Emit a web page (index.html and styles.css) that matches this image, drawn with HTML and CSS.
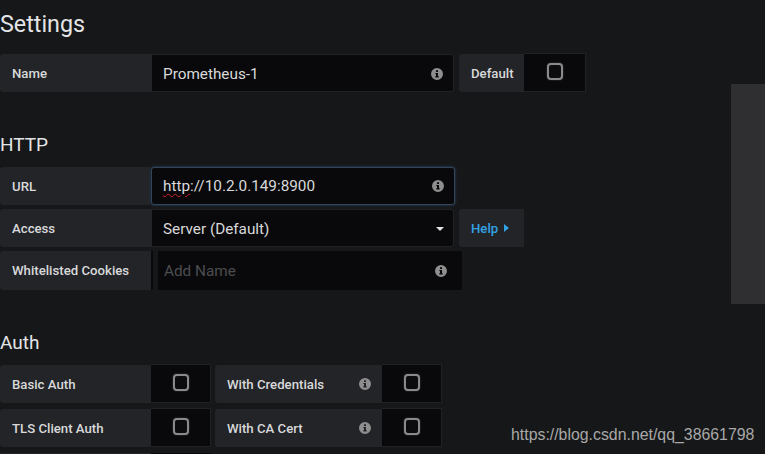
FILE: index.html
```html
<!DOCTYPE html>
<html lang="en">
<head>
    <meta charset="UTF-8">
    <title>Settings</title>
    <link rel="stylesheet" href="styles.css">
</head>
<body>
<svg class="defs" width="0" height="0">
    <symbol id="info" viewBox="0 0 12 12">
        <path fill-rule="evenodd" d="M6 0a6 6 0 1 1 0 12A6 6 0 0 1 6 0zM5 2.200v1.900h2V2.200zM4.300 5v1.100H5v2.200h-.7v1.200h3.400V8.300H7V5z"/>
    </symbol>
</svg>

<div class="page">
    <h3 class="title">Settings</h3>
    <div class="row row-name">
        <div class="label w-name">Name</div>
        <div class="input w-input"><span>Prometheus-1</span><svg class="info"><use href="#info"/></svg></div>
        <div class="label w-default">Default</div>
        <div class="check-cell w-default-check"><span class="check"></span></div>
    </div>

    <h3 class="heading heading-http">HTTP</h3>
    <div class="row">
        <div class="label w-url">URL</div>
        <div class="input input-focus"><span><span class="squiggle">http</span>://10.2.0.149:8900</span><svg class="info"><use href="#info"/></svg></div>
    </div>
    <div class="row">
        <div class="label w-name">Access</div>
        <div class="input w-input"><span>Server (Default)</span><i class="caret"></i></div>
        <div class="label w-default help">Help<i class="caret-right"></i></div>
    </div>
    <div class="row row-cookies">
        <div class="label w-cookies">Whitelisted Cookies</div>
        <div class="cookie-gap"></div>
        <div class="input input-flat"><span class="placeholder">Add Name</span><svg class="info"><use href="#info"/></svg></div>
    </div>

    <h3 class="heading heading-auth">Auth</h3>
    <div class="row row-auth">
        <div class="label w-cookies">Basic Auth</div>
        <div class="check-cell w-check"><span class="check"></span></div>
        <div class="label w-with">With Credentials<svg class="info"><use href="#info"/></svg></div>
        <div class="check-cell w-check"><span class="check"></span></div>
    </div>
    <div class="row row-auth">
        <div class="label w-cookies">TLS Client Auth</div>
        <div class="check-cell w-check"><span class="check"></span></div>
        <div class="label w-with">With CA Cert<svg class="info"><use href="#info"/></svg></div>
        <div class="check-cell w-check"><span class="check"></span></div>
    </div>
    <div class="row row-cut">
        <div class="label w-cookies"></div>
        <div class="check-cell-cut w-check"></div>
    </div>
</div>

<div class="scroll-thumb"></div>
<div class="watermark">https://blog.csdn.net/qq_38661798</div>
</body>
</html>
```

FILE: styles.css
```css
html, body { margin: 0; height: 454px; overflow: hidden; }
body { background-color: #161719; color: #d8d9da; font-family: Roboto, 'Liberation Sans', sans-serif; position: relative; }
.defs { position: absolute; }
.page { padding-top: 11px; }

.title { margin: 0 0 16px; font-size: 23.3px; line-height: 27px; font-weight: 400; color: #e3e4e5; }
.heading { margin: 0; font-size: 19px; line-height: 22px; font-weight: 400; color: #e3e4e5; }
.heading-http { margin-top: 42px; margin-bottom: 11px; }
.heading-auth { margin-top: 42px; margin-bottom: 11px; }

.row { display: flex; height: 38px; margin-bottom: 4px; }
.row-name { margin-bottom: 0; }
.row-auth { margin-bottom: 6px; }
.row-cookies { height: 39px; }
.row-cut { height: 3px; margin-bottom: 0; }

.label { display: flex; align-items: center; box-sizing: border-box; padding-left: 12px; background-color: #232428; border-radius: 3px 0 0 3px; font-size: 13.2px; font-weight: 500; color: #d8d9da; flex: none; }
.w-name { width: 152px; }
.w-url { width: 150px; }
.w-cookies { width: 151px; }
.w-default { width: 65px; margin-left: 5px; border-radius: 3px 0 0 3px; }
.w-with { width: 167px; margin-left: 4px; justify-content: space-between; padding-right: 11px; }
.w-default-check { width: 62px; }
.w-check { width: 60px; }

.input { display: flex; align-items: center; justify-content: space-between; box-sizing: border-box; background-color: #09090b; border: 1px solid #202226; border-radius: 0 3px 3px 0; padding: 0 10px 0 10px; font-size: 15.3px; color: #d8d9da; flex: none; }
.w-input { width: 302px; border-left: 0; padding-left: 11px; padding-top: 1px; }
.input-focus { width: 304px; border-color: #31465a; border-radius: 3px; box-shadow: 0 0 3px #2f4a66; padding-left: 11px; margin-left: 1px; }
.input-flat { width: 304px; border: 0; border-radius: 0; padding: 0 15px 0 6px; margin-left: 5px; }
.cookie-gap { width: 2px; background-color: #09090b; }
.placeholder { color: #4c4d50; }
.squiggle { text-decoration: underline wavy #d0212b; text-decoration-thickness: 1px; text-underline-offset: 2px; }

.info { width: 12px; height: 12px; fill: #8e8e8e; flex: none; }
.caret { width: 0; height: 0; margin-right: -1px; border-left: 4px solid transparent; border-right: 4px solid transparent; border-top: 4px solid #e3e4e5; }
.help { color: #33a2e5; }
.caret-right { width: 0; height: 0; margin-left: 6px; border-top: 4px solid transparent; border-bottom: 4px solid transparent; border-left: 5px solid #33a2e5; }

.check-cell { display: flex; align-items: center; justify-content: center; box-sizing: border-box; background-color: #09090b; border: 1px solid #202226; border-left: 0; margin-top: -1px; height: 39px; flex: none; }
.check-cell-cut { background-color: #09090b; height: 3px; flex: none; }
.check { display: block; box-sizing: border-box; width: 16px; height: 17px; margin-top: -2px; background-color: #0c0c0e; border: 2px solid #8a8a8a; border-radius: 4px; box-shadow: 0 0 2px #444; }

.scroll-thumb { position: absolute; left: 731px; top: 84px; width: 34px; height: 220px; background-color: #2f2f31; }
.watermark { position: absolute; left: 511px; top: 425px; font-family: 'Liberation Sans', Arial, sans-serif; font-size: 15.87px; line-height: 19px; color: #a8a8a8; white-space: nowrap; }
```
